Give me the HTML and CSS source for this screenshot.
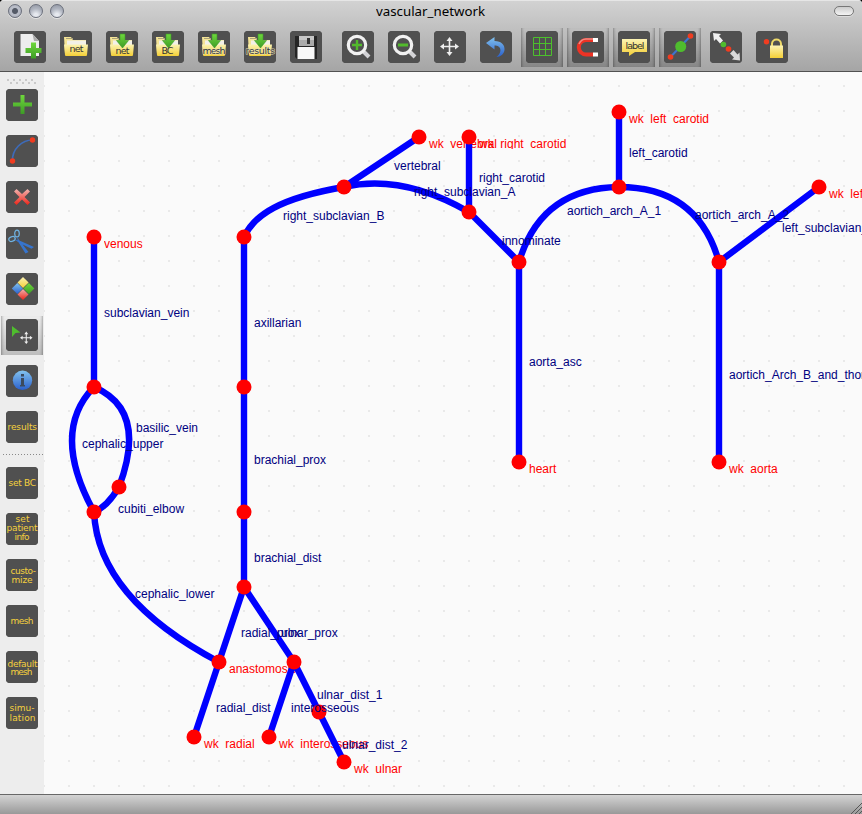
FILE: index.html
```html
<!DOCTYPE html>
<html lang="en">
<head>
<meta charset="utf-8">
<title>vascular_network</title>
<link rel="stylesheet" href="styles.css">
</head>
<body>
<svg class="defs" width="0" height="0">
  <defs>
    <linearGradient id="green" x1="0" y1="0" x2="0" y2="1"><stop offset="0" stop-color="#6fd83c"/><stop offset="1" stop-color="#3d9c26"/></linearGradient>
    <linearGradient id="yellow" x1="0" y1="0" x2="0" y2="1"><stop offset="0" stop-color="#fbf3b4"/><stop offset="1" stop-color="#f4cf36"/></linearGradient>
    <linearGradient id="blue" x1="0" y1="0" x2="0" y2="1"><stop offset="0" stop-color="#82c2ee"/><stop offset="1" stop-color="#2a60cc"/></linearGradient>
    <linearGradient id="red" x1="0" y1="0" x2="0" y2="1"><stop offset="0" stop-color="#f0b4b0"/><stop offset="1" stop-color="#ee2418"/></linearGradient>
    <g id="folder">
      <path d="M4 6h7l2 3h13v14H5z" fill="#f4e496"/>
      <path d="M6 7.500h7" stroke="#aaa27a"/>
      <path d="M7 9.500h19v10H7z" fill="#f2f0e8"/>
      <path d="M4 13.500h24l-1 10.500q0 1-1 1H6q-1 0-1-1z" fill="url(#yellow)"/>
    </g>
    <path id="down" d="M14 3h5v6.500h3.500L16.500 17 10.500 9.500H14z" fill="url(#green)" stroke="#3c9a28" stroke-width=".6"/>
    <path id="move" d="M9.500 0l3 4h-2.200v4.700H15V6.500l4 3-4 3v-2.200h-4.700V15h2.200l-3 4-3-4h2.200v-4.700H4v2.200l-4-3 4-3v2.200h4.700V4H6.500z"/>
    <pattern id="dots" x="18" y="10" width="25" height="25" patternUnits="userSpaceOnUse"><rect x="0" y="0" width="2" height="2" fill="#e9e9e9"/></pattern>
  </defs>
</svg>
<div class="window">
  <header class="chrome">
    <div class="titlebar">
      <div class="lights"><i class="light dirty"></i><i class="light"></i><i class="light"></i></div>
      <span class="title"><svg width="110" height="20"><text x="0" y="15" textLength="109" lengthAdjust="spacingAndGlyphs">vascular_network</text></svg></span>
      <i class="pill"></i>
    </div>
    <div class="toolbar">
      <button class="btn"><svg viewBox="0 0 32 32"><path d="M6.500 3h12L25 10v15H6.500z" fill="#ededed"/><path d="M18.500 3L25 10h-5z" fill="#aaa"/><path d="M17.500 11.500h5v5.500H28v5h-5.500v5.500h-5V22H12v-5h5.500z" transform="translate(-.5 0)" fill="url(#green)"/></svg></button>
      <button class="btn"><svg viewBox="0 0 32 32"><use href="#folder"/><text class="cap" x="9.500" y="21" textLength="14">net</text></svg></button>
      <button class="btn"><svg viewBox="0 0 32 32"><use href="#folder"/><use href="#down"/><text class="cap" x="9.500" y="23" textLength="14">net</text></svg></button>
      <button class="btn"><svg viewBox="0 0 32 32"><use href="#folder"/><use href="#down"/><text class="cap" x="9.500" y="23" textLength="12">BC</text></svg></button>
      <button class="btn"><svg viewBox="0 0 32 32"><use href="#folder"/><use href="#down"/><text class="cap halo" x="4.500" y="23" textLength="23">mesh</text></svg></button>
      <button class="btn"><svg viewBox="0 0 32 32"><use href="#folder"/><use href="#down"/><text class="cap halo" x="1.500" y="23" textLength="29.500">results</text></svg></button>
      <button class="btn"><svg viewBox="0 0 32 32"><path d="M5 5h22v23H7l-2-2z" fill="#252525"/><path d="M9 5h15v10H9z" fill="#aaa"/><path d="M9 5h15v4H9z" fill="#c6c6c6"/><path d="M17 7h3v6h-3z" fill="#333"/><path d="M7.500 16h17v12h-17z" fill="#f8f8f8"/></svg></button>
      <button class="btn gap"><svg viewBox="0 0 32 32"><path d="M20 19l7 7" stroke="#d3d3d6" stroke-width="4"/><circle cx="15" cy="14" r="8.700" fill="#505050" stroke="#f1f1f1" stroke-width="3.200"/><path d="M10 14h10M15 9v10" stroke="#52ba2c" stroke-width="2.400"/></svg></button>
      <button class="btn"><svg viewBox="0 0 32 32"><path d="M20 19l7 7" stroke="#d3d3d6" stroke-width="4"/><circle cx="15" cy="14" r="8.700" fill="#505050" stroke="#f1f1f1" stroke-width="3.200"/><path d="M10 14h10" stroke="#52ba2c" stroke-width="2.800"/></svg></button>
      <button class="btn"><svg viewBox="0 0 32 32"><use href="#move" x="6" y="6" fill="#eee"/></svg></button>
      <button class="btn"><svg viewBox="0 0 32 32"><path d="M6 12l8.500-6v4c7 0 10.500 4 10 9-.5 4-4 7-8 7 4-3 5.500-8 2-10.500-1-.7-2.500-1-4-1v4z" fill="url(#blue)"/></svg></button>
      <button class="btn on"><svg viewBox="0 0 32 32"><path d="M7.500 6.500h18v18h-18zM13.500 6.500v18M19.500 6.500v18M7.500 12.500h18M7.500 18.500h18" fill="none" stroke="#4cc02c"/></svg></button>
      <button class="btn on"><svg viewBox="0 0 32 32"><path d="M21 9h-7a7.200 7.200 0 0 0 0 14.400h7" fill="none" stroke="#ed3325" stroke-width="4"/><path d="M21 8h-7a8 8 0 0 0-7 5" fill="none" stroke="#f08a82" stroke-width="1.500"/><path d="M21 7h5v4h-5zM21 21.400h5v4h-5z" fill="#fff"/></svg></button>
      <button class="btn on"><svg viewBox="0 0 32 32"><path d="M4 8h25v13H17l-6 4v-4H4z" fill="url(#yellow)"/><text class="cap" x="7.500" y="18" textLength="19">label</text></svg></button>
      <button class="btn on"><svg viewBox="0 0 32 32"><path d="M6.500 26l20-21" stroke="#3f74cf" stroke-width="2"/><circle cx="16.700" cy="15.500" r="5.500" fill="#4fbd2e"/><circle cx="6.500" cy="26" r="2.800" fill="#f03c20"/><circle cx="26.500" cy="5" r="2.800" fill="#f03c20"/></svg></button>
      <button class="btn"><svg viewBox="0 0 32 32"><path d="M3 2l8 1-2 2 4 4.500-3 3L6 8l-2 2z" fill="#f0f0f0"/><path d="M30 29.500l-8-1 2-2-4-4 3.500-3.500 4 4.500 2-2z" fill="#dadada"/><circle cx="13.400" cy="13.500" r="2.800" fill="#4fbd2e"/><circle cx="18.500" cy="18" r="2.800" fill="#f03c20"/></svg></button>
      <button class="btn"><svg viewBox="0 0 32 32"><path d="M16 15v-2c0-6 9-6 9 0v2" fill="none" stroke="#eeda6a" stroke-width="2"/><path d="M14 14.500h13V27H14z" fill="url(#yellow)"/><circle cx="10.500" cy="10.800" r="2.700" fill="#f03c20"/></svg></button>
    </div>
  </header>
  <main class="body">
    <nav class="side">
      <i class="grip"></i>
      <button class="btn"><svg viewBox="0 0 32 32"><path d="M14.500 6h4v7.500H26v4h-7.500V25h-4v-7.500H7v-4h7.500z" fill="url(#green)"/></svg></button>
      <button class="btn"><svg viewBox="0 0 32 32"><path d="M6.500 26C6 14 16 5 26.500 5" fill="none" stroke="#3e6bb8" stroke-width="1.700"/><circle cx="6.500" cy="26" r="2.700" fill="#f03c20"/><circle cx="26.500" cy="5" r="2.700" fill="#f03c20"/></svg></button>
      <button class="btn"><svg viewBox="0 0 32 32"><path d="M10.500 8l5.500 5 5.500-5 2.500 2.500-5.500 5.500 5.500 5.500-2.500 2.500-5.500-5.500-5.500 5.500L8 21.500l5.500-5.500L8 10.500z" fill="url(#red)"/></svg></button>
      <button class="btn"><svg viewBox="0 0 32 32"><ellipse cx="11" cy="6.500" rx="2.300" ry="3.300" fill="none" stroke="#70b3e2" stroke-width="1.200"/><ellipse cx="6" cy="12" rx="3.300" ry="2.300" transform="rotate(-20 6 12)" fill="none" stroke="#70b3e2" stroke-width="1.200"/><path d="M11 9.500l2.500 4L22.500 25l-3 1.500-7.500-12zM8.500 12.500l6 1.500 13.500 6-2.500 1.700-12-5.700z" fill="#3674cd"/></svg></button>
      <button class="btn"><svg viewBox="0 0 32 32"><path d="M17 4l5.600 5.500L17 15l-5.500-5.500z" fill="url(#yellow)"/><path d="M11.300 10l5.500 5.500-5.500 5.500-5.500-5.500z" fill="url(#blue)"/><path d="M22.900 10l5.500 5.500-5.500 5.500-5.500-5.500z" fill="url(#green)"/><path d="M17 16l5.500 5.500L17 27l-5.500-5.500z" fill="url(#red)"/></svg></button>
      <button class="btn on"><svg viewBox="0 0 32 32"><path d="M6 7l8.500 6.500-5 .5L6 18z" fill="#4fbd2e"/><use href="#move" transform="translate(14 12.500) scale(.66)" fill="#eee"/></svg></button>
      <button class="btn"><svg viewBox="0 0 32 32"><circle cx="16.500" cy="15.300" r="9.700" fill="url(#blue)"/><path d="M15 13h3v7h1v1.500h-5V20h1zM15 9h3v2.500h-3z" fill="#3b4a5e"/></svg></button>
      <button class="btn"><svg viewBox="0 0 32 32"><text x="1.500" y="19" textLength="29.500">results</text></svg></button>
      <i class="rule"></i>
      <button class="btn"><svg viewBox="0 0 32 32"><text x="2.500" y="19" textLength="27.500">set BC</text></svg></button>
      <button class="btn"><svg viewBox="0 0 32 32"><text x="9.500" y="9" textLength="14">set</text><text x=".5" y="18" textLength="31">patient</text><text x="8.500" y="27" textLength="15">info</text></svg></button>
      <button class="btn"><svg viewBox="0 0 32 32"><text x="4.500" y="15" textLength="25.500">custo-</text><text x="5.500" y="24" textLength="21">mize</text></svg></button>
      <button class="btn"><svg viewBox="0 0 32 32"><text x="4.500" y="19" textLength="23">mesh</text></svg></button>
      <button class="btn"><svg viewBox="0 0 32 32"><text x="1.500" y="16" textLength="30">default</text><text x="4.500" y="24" textLength="22">mesh</text></svg></button>
      <button class="btn"><svg viewBox="0 0 32 32"><text x="3.500" y="14" textLength="25">simu-</text><text x="3.500" y="24" textLength="26">lation</text></svg></button>
    </nav>
    <svg class="graph" viewBox="44 72 818 722" width="818" height="722">
      <rect x="44" y="72" width="818" height="722" fill="url(#dots)"/>
      <g class="node-labels">
        <text x="104" y="248">venous</text>
        <text x="429" y="148">wk_vertebral</text>
        <text x="479" y="148">wk_right_carotid</text>
        <text x="629" y="123">wk_left_carotid</text>
        <text x="829" y="198">wk_left_subclavian</text>
        <text x="529" y="473">heart</text>
        <text x="729" y="473">wk_aorta</text>
        <text x="229" y="673">anastomosis</text>
        <text x="204" y="748">wk_radial</text>
        <text x="279" y="748">wk_interosseous</text>
        <text x="354" y="773">wk_ulnar</text>
      </g>
      <g class="edges">
        <path d="M94 237V387M94 387Q50 432 94 512M94 387Q148 410 119 487M119 487Q107 507 94 512M94 512Q98 598 219 662"/>
        <path d="M244 237V587L219 662 194 737M244 587L294 662 319 712 344 762M294 662L269 737"/>
        <path d="M244 237C254 215 280 198 344 187L419 137M344 187Q402 173.500 469 212M469 137V212L519 262V462"/>
        <path d="M519 262Q541 188 619 187V112M619 187Q698 187 719 262V462M719 262L819 187"/>
      </g>
      <g class="nodes">
        <circle cx="94" cy="237" r="7.500"/><circle cx="94" cy="387" r="7.500"/><circle cx="119" cy="487" r="7.500"/><circle cx="94" cy="512" r="7.500"/>
        <circle cx="219" cy="662" r="7.500"/><circle cx="194" cy="737" r="7.500"/><circle cx="244" cy="237" r="7.500"/><circle cx="244" cy="387" r="7.500"/>
        <circle cx="244" cy="512" r="7.500"/><circle cx="244" cy="587" r="7.500"/><circle cx="294" cy="662" r="7.500"/><circle cx="269" cy="737" r="7.500"/>
        <circle cx="319" cy="712" r="7.500"/><circle cx="344" cy="762" r="7.500"/><circle cx="344" cy="187" r="7.500"/><circle cx="419" cy="137" r="7.500"/>
        <circle cx="469" cy="137" r="7.500"/><circle cx="469" cy="212" r="7.500"/><circle cx="519" cy="262" r="7.500"/><circle cx="519" cy="462" r="7.500"/>
        <circle cx="619" cy="112" r="7.500"/><circle cx="619" cy="187" r="7.500"/><circle cx="719" cy="262" r="7.500"/><circle cx="719" cy="462" r="7.500"/>
        <circle cx="819" cy="187" r="7.500"/>
      </g>
      <g class="edge-labels">
        <text x="394" y="170">vertebral</text>
        <text x="479" y="182">right_carotid</text>
        <text x="414" y="196">right_subclavian_A</text>
        <text x="283" y="220">right_subclavian_B</text>
        <text x="502" y="245">innominate</text>
        <text x="567" y="215">aortich_arch_A_1</text>
        <text x="695" y="219">aortich_arch_A_2</text>
        <text x="782" y="232">left_subclavian_A</text>
        <text x="629" y="157">left_carotid</text>
        <text x="529" y="366">aorta_asc</text>
        <text x="729" y="379">aortich_Arch_B_and_thoracic</text>
        <text x="104" y="317">subclavian_vein</text>
        <text x="254" y="327">axillarian</text>
        <text x="254" y="464">brachial_prox</text>
        <text x="254" y="562">brachial_dist</text>
        <text x="136" y="432">basilic_vein</text>
        <text x="82" y="448">cephalic_upper</text>
        <text x="118" y="513">cubiti_elbow</text>
        <text x="135" y="598">cephalic_lower</text>
        <text x="241" y="637">radial_prox</text>
        <text x="281" y="637">ulnar_prox</text>
        <text x="216" y="712">radial_dist</text>
        <text x="317" y="699">ulnar_dist_1</text>
        <text x="291" y="712">interosseous</text>
        <text x="342" y="749">ulnar_dist_2</text>
      </g>
    </svg>
  </main>
  <footer class="status"><svg width="14" height="14" viewBox="0 0 14 14"><path d="M3 14L14 3M7 14L14 7M11 14l3-3" stroke="#555"/></svg></footer>
</div>
</body>
</html>
```

FILE: styles.css
```css
* { box-sizing: border-box; }
body { margin: 0; background: #000; overflow: hidden; font-family: "Liberation Sans", sans-serif; }
.defs { position: absolute; }
.window { display: flex; flex-direction: column; width: 862px; height: 814px; border-radius: 4px 4px 0 0; overflow: hidden; background: #fafafa; }
.chrome { height: 72px; flex: none; background: linear-gradient(#d2d2d2, #a5a5a5); border-top: 1px solid #e6e6e6; border-bottom: 1px solid #515151; }
.titlebar { height: 30px; display: flex; justify-content: space-between; align-items: flex-start; padding: 0 8px; }
.lights { display: flex; gap: 7px; padding-top: 3px; width: 92px; }
.light { width: 14px; height: 14px; border-radius: 50%; border: 1px solid #6a6f7b; background: radial-gradient(circle at 50% 85%, #e6e9ef 0 15%, #b0b5c0 55%, #8e93a0 100%); box-shadow: 0 1px 0 #e4e4e4; }
.dirty { background: radial-gradient(circle, #555b68 0 2.5px, #b9bdc8 3.5px 5px, #888e9c 100%); }
.title { height: 20px; }
.title text { font: 13px "Noto Sans", sans-serif; fill: #000; }
.title svg { display: block; }
.titlebar .pill { margin-left: 72px; }
.pill { width: 20px; height: 10px; margin-top: 5px; border: 1px solid #777; border-radius: 5px; background: linear-gradient(#ccc, #f4f4f4); box-shadow: 0 1px 0 #ddd; }
.toolbar { display: flex; gap: 14px; padding-left: 14px; }
.btn { position: relative; flex: none; width: 32px; height: 32px; padding: 0; border: 0; border-radius: 4px; background: #505050; }
.btn svg { display: block; width: 32px; height: 32px; position: relative; border-radius: 4px; background: #505050; }
.btn text { font: 9px "DejaVu Sans", sans-serif; fill: #f5d03e; }
.btn text.cap { font-size: 9.5px; fill: #333; }
.btn text.halo { paint-order: stroke; stroke: #e6dfb8; stroke-width: 1px; }
.gap { margin-left: 6px; }
.on::before { content: ""; position: absolute; inset: -3px -5px -4px; background: linear-gradient(#0000, #0003); border: solid #0003; border-width: 0 1px; box-shadow: inset 2px 0 2px -1px #0002, inset -2px 0 2px -1px #0002; }
.body { display: flex; height: 722px; flex: none; }
.side { width: 44px; flex: none; padding: 7px 0 0 6px; background: #ededed; display: flex; flex-direction: column; align-items: flex-start; gap: 14px; }
.grip { width: 30px; height: 6px; margin: 0 0 -10px 1px; background: radial-gradient(circle at 1px 1px, #c9c9c9 1px, #0000 1.3px) 0 0 / 6px 8px, radial-gradient(circle at 4px 4px, #c9c9c9 1px, #0000 1.3px) 0 0 / 6px 8px; }
.rule { width: 40px; height: 1px; margin: -3px 0 -2px -3px; background: repeating-linear-gradient(90deg, #888 0 1px, #0000 1px 3px); }
.graph { display: block; }
.edges { fill: none; stroke: #00f; stroke-width: 6.4px; }
.nodes { fill: #f00; }
.graph text { font: 12px "Liberation Sans", sans-serif; }
.node-labels text { fill: #f00; clip-path: inset(0 0 2px 0); }
.edge-labels text { fill: #000080; }
.status { height: 20px; flex: none; border-top: 1px solid #686868; background: linear-gradient(#d4d4d4, #999); display: flex; justify-content: flex-end; align-items: flex-end; }
```
